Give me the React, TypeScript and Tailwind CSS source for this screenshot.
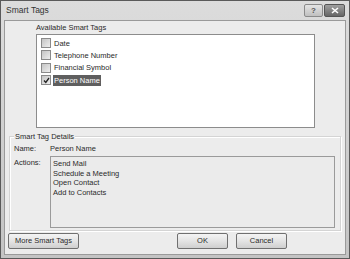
import React from "react";

const tags = [
  { label: "Date", checked: false },
  { label: "Telephone Number", checked: false },
  { label: "Financial Symbol", checked: false },
  { label: "Person Name", checked: true },
];

const actions = ["Send Mail", "Schedule a Meeting", "Open Contact", "Add to Contacts"];

function Checkbox({ checked }: { checked: boolean }) {
  return (
    <span className="flex h-[10px] w-[10px] shrink-0 items-center justify-center border border-[#8a8a8a] bg-gradient-to-br from-[#c4c4c4] to-[#eeeeee]">
      {checked && (
        <svg width="7" height="7" viewBox="0 0 7 7">
          <path d="M1 3.5 L2.8 5.5 L6 1" fill="none" stroke="#222" strokeWidth="1.3" />
        </svg>
      )}
    </span>
  );
}

function Button({ children, className }: { children: React.ReactNode; className: string }) {
  return (
    <button
      className={
        "flex h-[16px] items-center justify-center rounded-[2px] border border-[#707070] bg-gradient-to-b from-[#f4f4f4] via-[#e4e4e4] to-[#cfcfcf] text-[7.5px] text-[#2a2a2a] " +
        className
      }
    >
      {children}
    </button>
  );
}

export default function App() {
  return (
    <div
      className="flex h-[259px] w-[350px] flex-col border border-[#5a5a5a] bg-gradient-to-b from-[#dcdcdc] to-[#c4c4c4] text-[#2a2a2a]"
      style={{ fontFamily: '"Liberation Sans", Arial, sans-serif' }}
    >
      <div className="flex h-[19px] shrink-0 items-center justify-between pl-[5px] pr-[4px]">
        <span className="text-[8.5px] text-[#333]">Smart Tags</span>
        <div className="flex gap-[1px]">
          <span className="flex h-[13px] w-[19px] items-center justify-center rounded-[2px] border border-[#8a8a8a] bg-gradient-to-b from-[#e4e4e4] to-[#c0c0c0] text-[8px] font-bold text-[#555]">
            ?
          </span>
          <span className="flex h-[13px] w-[21px] items-center justify-center rounded-[2px] border border-[#555] bg-gradient-to-b from-[#a0a0a0] to-[#666]">
            <svg width="8" height="7" viewBox="0 0 8 7">
              <path d="M1 1 L7 6 M7 1 L1 6" stroke="#fff" strokeWidth="1.6" />
            </svg>
          </span>
        </div>
      </div>

      <div className="mx-[3px] mb-[3px] flex flex-1 flex-col border border-[#9a9a9a] bg-[#ececec]">
        <div className="pl-[31px] pt-[2px]">
          <div className="text-[7.5px] leading-[10px]">Available Smart Tags</div>
          <div className="mt-[1px] h-[94px] w-[279px] border border-[#8c8c8c] bg-white pl-[4px] pt-[2px]">
            {tags.map((t) => (
              <div key={t.label} className="flex h-[12.3px] items-center gap-[2px]">
                <Checkbox checked={t.checked} />
                <span
                  className={
                    "px-[1px] text-[7.5px] leading-[11px] " +
                    (t.checked ? "bg-[#5f5f5f] text-white" : "")
                  }
                >
                  {t.label}
                </span>
              </div>
            ))}
          </div>
        </div>

        <div className="mx-[4px] mt-[8px] h-[95px] border border-[#d4d4d4] shadow-[inset_1px_1px_0_#fff,1px_1px_0_#fff]">
          <div className="-mt-[5px] ml-[4px] w-fit bg-[#ececec] px-[1px] text-[7.5px] leading-[10px]">
            Smart Tag Details
          </div>
          <div className="mt-[2px] flex pl-[4px] text-[7.5px] leading-[10px]">
            <span className="w-[36px]">Name:</span>
            <span>Person Name</span>
          </div>
          <div className="mt-[2px] flex pl-[4px] pr-[5px] text-[7.5px]">
            <span className="w-[36px] pt-[2px] leading-[10px]">Actions:</span>
            <div className="h-[72px] flex-1 border border-[#9a9a9a] bg-[#ebebeb] pl-[2px] pt-[2px] leading-[9.5px]">
              {actions.map((a) => (
                <div key={a}>{a}</div>
              ))}
            </div>
          </div>
        </div>

        <div className="mt-[2px] flex items-center px-[3px]">
          <Button className="w-[71px]">More Smart Tags</Button>
          <div className="ml-[98px] flex gap-[8px]">
            <Button className="w-[51px]">OK</Button>
            <Button className="w-[51px]">Cancel</Button>
          </div>
        </div>
      </div>
    </div>
  );
}
